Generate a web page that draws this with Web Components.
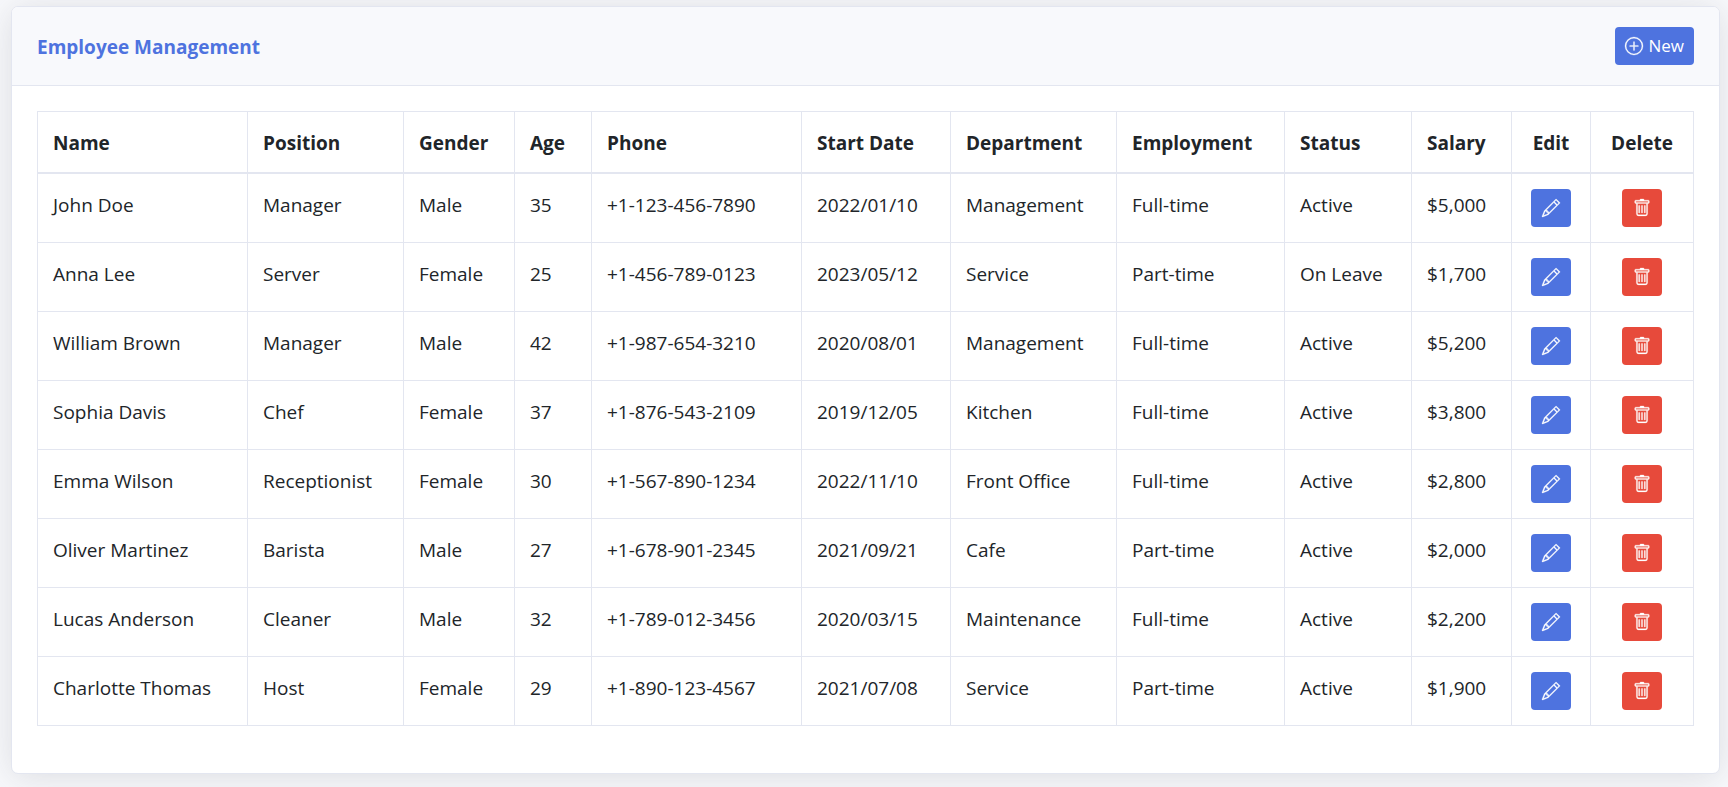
<!DOCTYPE html>
<html lang="en">
<head>
<meta charset="utf-8">
<meta name="viewport" content="width=device-width, initial-scale=1">
<title>Employee Management</title>
<style>
  body {
    margin: 0;
    padding: 6px 8px 14px 11px;
    background: #f8f9fc;
    color: #212529;
    font: 19px/32px "Open Sans", "Noto Sans", sans-serif;
  }
</style>
</head>
<body>
<panel-card>
  <h1 slot="title">Employee Management</h1>
  <action-button slot="action" icon="plus">New</action-button>
  <employee-table></employee-table>
</panel-card>

<script>
  const ICONS = {
    plus: '<path d="M8 15A7 7 0 1 1 8 1a7 7 0 0 1 0 14m0 1A8 8 0 1 0 8 0a8 8 0 0 0 0 16"/><path d="M8 4a.5.5 0 0 1 .5.5v3h3a.5.5 0 0 1 0 1h-3v3a.5.5 0 0 1-1 0v-3h-3a.5.5 0 0 1 0-1h3v-3A.5.5 0 0 1 8 4"/>',
    pencil: '<path d="M12.146.146a.5.5 0 0 1 .708 0l3 3a.5.5 0 0 1 0 .708l-10 10a.5.5 0 0 1-.168.11l-5 2a.5.5 0 0 1-.65-.65l2-5a.5.5 0 0 1 .11-.168zM11.207 2.5 13.5 4.793 14.793 3.5 12.5 1.207zm1.586 3L10.5 3.207 4 9.707V10h.5a.5.5 0 0 1 .5.5v.5h.5a.5.5 0 0 1 .5.5v.5h.293zm-9.761 5.175-.106.106-1.528 3.821 3.821-1.528.106-.106A.5.5 0 0 1 5 12.5V12h-.5a.5.5 0 0 1-.5-.5V11h-.5a.5.5 0 0 1-.468-.325"/>',
    trash: '<path d="M5.5 5.5A.5.5 0 0 1 6 6v6a.5.5 0 0 1-1 0V6a.5.5 0 0 1 .5-.5m2.5 0a.5.5 0 0 1 .5.5v6a.5.5 0 0 1-1 0V6a.5.5 0 0 1 .5-.5m3 .5a.5.5 0 0 0-1 0v6a.5.5 0 0 0 1 0z"/><path d="M14.5 3a1 1 0 0 1-1 1H13v9a2 2 0 0 1-2 2H5a2 2 0 0 1-2-2V4h-.5a1 1 0 0 1-1-1V2a1 1 0 0 1 1-1H6a1 1 0 0 1 1-1h2a1 1 0 0 1 1 1h3.500a1 1 0 0 1 1 1zM4.118 4 4 4.059V13a1 1 0 0 0 1 1h6a1 1 0 0 0 1-1V4.059L11.882 4zM2.500 3h11V2h-11z"/>'
  };

  class PanelCard extends HTMLElement {
    constructor() {
      super();
      this.attachShadow({ mode: "open" }).innerHTML = `
        <style>
          :host {
            display: block;
            background: #fff;
            border: 1px solid #e3e6f0;
            border-radius: 7px;
            box-shadow: 0 3px 35px rgba(58, 59, 69, .15);
          }
          header {
            display: flex;
            align-items: center;
            justify-content: space-between;
            padding: 20px 25px;
            background: #f8f9fc;
            border-bottom: 1px solid #e3e6f0;
            border-radius: 6px 6px 0 0;
          }
          ::slotted(h1) {
            margin: 0;
            padding-top: 2px;
            color: #4e73df;
            font-size: 19px;
            font-weight: 700;
          }
          section { padding: 25px 25px 47px; }
        </style>
        <header><slot name="title"></slot><slot name="action"></slot></header>
        <section><slot></slot></section>`;
    }
  }

  class ActionButton extends HTMLElement {
    constructor() {
      super();
      const icon = this.getAttribute("icon");
      const label = this.getAttribute("label");
      this.attachShadow({ mode: "open" }).innerHTML = `
        <style>
          :host { display: inline-block; vertical-align: top; }
          button {
            display: flex;
            align-items: center;
            justify-content: center;
            gap: 5px;
            box-sizing: border-box;
            height: 38px;
            min-width: 40px;
            padding: 0 10px;
            border: 0;
            border-radius: 4px;
            background: var(--button-color, #4e73df);
            color: #fff;
            font: inherit;
            font-size: 17px;
            cursor: pointer;
          }
          svg {
            display: block;
            flex: none;
            width: 18px;
            height: 18px;
            overflow: visible;
            fill: currentColor;
            stroke: currentColor;
            stroke-width: .25;
          }
          :host([icon="trash"]) { --button-color: #e74a3b; }
        </style>
        <button type="button"${label ? ` aria-label="${label}"` : ""}>
          <svg viewBox="0 0 16 16" aria-hidden="true">${ICONS[icon]}</svg><slot></slot>
        </button>`;
    }
  }

  const COLUMNS = [
    ["Name", 210], ["Position", 156], ["Gender", 111], ["Age", 77], ["Phone", 210],
    ["Start Date", 149], ["Department", 166], ["Employment", 168], ["Status", 127],
    ["Salary", 100], ["Edit", 79], ["Delete", 103]
  ];
  const EMPLOYEES = [
    ["John Doe", "Manager", "Male", "35", "+1-123-456-7890", "2022/01/10", "Management", "Full-time", "Active", "$5,000"],
    ["Anna Lee", "Server", "Female", "25", "+1-456-789-0123", "2023/05/12", "Service", "Part-time", "On Leave", "$1,700"],
    ["William Brown", "Manager", "Male", "42", "+1-987-654-3210", "2020/08/01", "Management", "Full-time", "Active", "$5,200"],
    ["Sophia Davis", "Chef", "Female", "37", "+1-876-543-2109", "2019/12/05", "Kitchen", "Full-time", "Active", "$3,800"],
    ["Emma Wilson", "Receptionist", "Female", "30", "+1-567-890-1234", "2022/11/10", "Front Office", "Full-time", "Active", "$2,800"],
    ["Oliver Martinez", "Barista", "Male", "27", "+1-678-901-2345", "2021/09/21", "Cafe", "Part-time", "Active", "$2,000"],
    ["Lucas Anderson", "Cleaner", "Male", "32", "+1-789-012-3456", "2020/03/15", "Maintenance", "Full-time", "Active", "$2,200"],
    ["Charlotte Thomas", "Host", "Female", "29", "+1-890-123-4567", "2021/07/08", "Service", "Part-time", "Active", "$1,900"]
  ];

  class EmployeeTable extends HTMLElement {
    constructor() {
      super();
      this.attachShadow({ mode: "open" }).innerHTML = `
        <style>
          :host { display: block; overflow-x: auto; }
          table {
            width: 100%;
            table-layout: fixed;
            border-collapse: collapse;
          }
          th, td {
            padding: 15px;
            border: 1px solid #e3e6f0;
            text-align: left;
            vertical-align: top;
            white-space: nowrap;
          }
          thead th { padding-bottom: 13px; border-bottom-width: 2px; font-weight: 700; }
          th:nth-child(n + 11), td:nth-child(n + 11) { text-align: center; }
        </style>
        <table>
          <colgroup>${COLUMNS.map(([, w]) => `<col style="width:${w}px">`).join("")}</colgroup>
          <thead><tr>${COLUMNS.map(([name]) => `<th scope="col">${name}</th>`).join("")}</tr></thead>
          <tbody>${EMPLOYEES.map(row => `<tr>${row.map(v => `<td>${v}</td>`).join("")}
            <td><action-button icon="pencil" label="Edit ${row[0]}"></action-button></td>
            <td><action-button icon="trash" label="Delete ${row[0]}"></action-button></td></tr>`).join("")}</tbody>
        </table>`;
    }
  }

  customElements.define("panel-card", PanelCard);
  customElements.define("action-button", ActionButton);
  customElements.define("employee-table", EmployeeTable);
</script>
</body>
</html>
